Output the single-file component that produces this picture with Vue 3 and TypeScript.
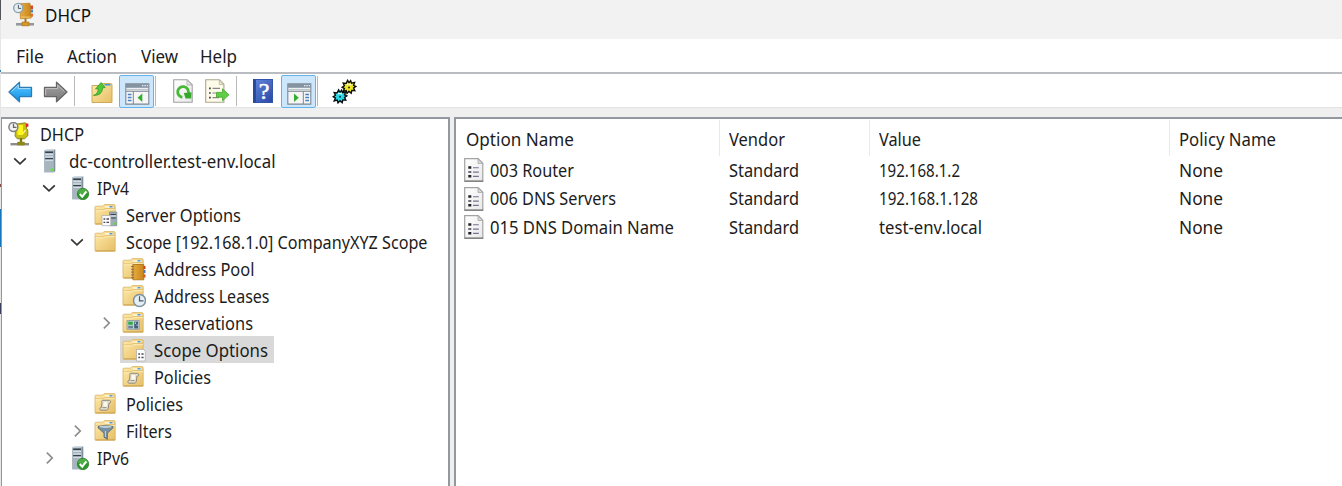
<script setup lang="ts">
import type { Directive } from 'vue'

interface TreeNode {
  label: string
  level: number
  icon: string
  width: number
  toggle?: 'open' | 'closed'
  selected?: boolean
}

interface Cell {
  text: string
  width: number
}

const menu: Cell[] = [
  { text: 'File', width: 28 },
  { text: 'Action', width: 50 },
  { text: 'View', width: 37 },
  { text: 'Help', width: 37 },
]

const nodes: TreeNode[] = [
  { label: 'DHCP', level: 0, icon: 'dhcp-tree', width: 44 },
  { label: 'dc-controller.test-env.local', level: 1, icon: 'server', width: 206.5, toggle: 'open' },
  { label: 'IPv4', level: 2, icon: 'server-ok', width: 32, toggle: 'open' },
  { label: 'Server Options', level: 3, icon: 'folder-server', width: 115 },
  { label: 'Scope [192.168.1.0] CompanyXYZ Scope', level: 3, icon: 'folder', width: 301.5, toggle: 'open' },
  { label: 'Address Pool', level: 4, icon: 'folder-book', width: 100.5 },
  { label: 'Address Leases', level: 4, icon: 'folder-clock', width: 115.5 },
  { label: 'Reservations', level: 4, icon: 'folder-card', width: 99, toggle: 'closed' },
  { label: 'Scope Options', level: 4, icon: 'folder-list', width: 114, selected: true },
  { label: 'Policies', level: 4, icon: 'folder-scroll', width: 57 },
  { label: 'Policies', level: 3, icon: 'folder-scroll', width: 57 },
  { label: 'Filters', level: 3, icon: 'folder-funnel', width: 46, toggle: 'closed' },
  { label: 'IPv6', level: 2, icon: 'server-ok', width: 32, toggle: 'closed' },
]

const columns: Cell[] = [
  { text: 'Option Name', width: 108 },
  { text: 'Vendor', width: 56 },
  { text: 'Value', width: 42 },
  { text: 'Policy Name', width: 97 },
]

const rows: Cell[][] = [
  [{ text: '003 Router', width: 84 }, { text: 'Standard', width: 70 }, { text: '192.168.1.2', width: 81 }, { text: 'None', width: 44 }],
  [{ text: '006 DNS Servers', width: 126 }, { text: 'Standard', width: 70 }, { text: '192.168.1.128', width: 99 }, { text: 'None', width: 44 }],
  [{ text: '015 DNS Domain Name', width: 184 }, { text: 'Standard', width: 70 }, { text: 'test-env.local', width: 103 }, { text: 'None', width: 44 }],
]

// Condenses a label horizontally so that it occupies the given width.
const vFit: Directive<HTMLElement, number> = {
  mounted(el, { value }) {
    el.style.transform = `scaleX(${value / el.getBoundingClientRect().width})`
  },
}
</script>

<template>
  <svg class="defs" width="0" height="0" aria-hidden="true">
    <defs>
      <linearGradient id="gFolder" x1="0" y1="0" x2="1" y2="1"><stop offset="0" stop-color="#ffeaaa" /><stop offset="1" stop-color="#e6be66" /></linearGradient>
      <linearGradient id="gBlue" x1="0" y1="0" x2="0" y2="1"><stop offset="0" stop-color="#70c4f7" /><stop offset=".5" stop-color="#35aef5" /><stop offset="1" stop-color="#1488d8" /></linearGradient>
      <linearGradient id="gGray" x1="0" y1="0" x2="0" y2="1"><stop offset="0" stop-color="#a5a5a5" /><stop offset="1" stop-color="#777" /></linearGradient>
      <linearGradient id="gServer" x1="0" y1="0" x2="1" y2="0"><stop offset="0" stop-color="#b5c2cc" /><stop offset="1" stop-color="#7b8b98" /></linearGradient>
      <linearGradient id="gPage" x1="0" y1="0" x2="1" y2="1"><stop offset="0" stop-color="#fff" /><stop offset="1" stop-color="#e9e9e9" /></linearGradient>
      <linearGradient id="gBook" x1="0" y1="0" x2="1" y2="0"><stop offset="0" stop-color="#e9ad3b" /><stop offset="1" stop-color="#c8841b" /></linearGradient>
    </defs>
    <symbol id="folder" viewBox="0 0 24 24">
      <path d="M1 4.2q0-1 1-1h6.5l1.6-1.6h9.7q1.4 0 1.4 1.4v17.5q0 .8-.8.8H1.8q-.8 0-.8-.8z" fill="url(#gFolder)" stroke="#d7b261" stroke-width=".8" />
      <path d="M10.8 3.2h8.4v1.6h-8.4z" fill="#fff6dc" /><path d="M15.5 3h3v1.5h-3z" fill="#4f9fe0" />
      <path d="M1.2 6.9h8.3l1.5-1.2h10" fill="none" stroke="#dcb765" stroke-width=".8" />
      <path d="M1.5 7.8h8.2l1.5-1.1h9.7" fill="none" stroke="#fff1bf" stroke-width=".9" />
      <path d="M1.4 20.8h20" stroke="#c99e4b" stroke-width=".8" />
    </symbol>
    <symbol id="server" viewBox="0 0 24 24">
      <path d="M7.2 1.5 9 .5h9.3v21.8l-1.5 1H7.2z" fill="url(#gServer)" />
      <path d="M7.2 1.5h9.6v21.8H7.2z" fill="#a7b5bf" /><path d="M9 .6h8.6l-.8 1H7.5z" fill="#dbe4ea" />
      <path d="M8.2 3.3h7.8M8.2 9.6h7.8" stroke="#32404b" stroke-width="1.4" />
      <path d="M8.2 5.3h7.8M8.2 8h7.8M8.2 11.3h7.8" stroke="#e2e9ed" stroke-width="1.1" />
      <path d="M13.5 19.6h3v2.1h-3z" fill="#5eea2c" />
    </symbol>
    <symbol id="server-ok" viewBox="0 0 24 24">
      <use href="#server" width="24" height="24" />
      <circle cx="18" cy="18" r="5.7" fill="#2f962c" stroke="#1f7a21" stroke-width=".7" />
      <path d="M12.9 17a5.2 5.2 0 0 1 10.2 0q-5 2-10.2 0z" fill="#57b64c" opacity=".7" />
      <path d="m14.8 18 2.4 2.7 4.2-5.4" fill="none" stroke="#fff" stroke-width="2" />
    </symbol>
    <symbol id="folder-server" viewBox="0 0 24 24">
      <use href="#folder" width="24" height="24" />
      <path d="M15.5 9h7.3v13.8h-7.3z" fill="#9eacb7" stroke="#71808d" stroke-width=".6" />
      <path d="M16.5 11.5h5.4M16.5 15h5.4" stroke="#33424e" /><path d="M16.5 13h5.4" stroke="#eef2f5" /><path d="M20 19.8h2.2v1.8H20z" fill="#54dd29" />
      <path d="M8 12.5h8.8v10.2H8z" fill="#fafafa" stroke="#a9a9a9" stroke-width=".7" />
      <path d="M9.5 16h1.7m1.3 0h2.5m-5.5 3.4h1.7m1.3 0h2.5" stroke="#48484f" stroke-width="1.3" />
    </symbol>
    <symbol id="folder-book" viewBox="0 0 24 24">
      <use href="#folder" width="24" height="24" />
      <path d="M21 9h2.5v3H21z" fill="#d83a25" /><path d="M21 13h2.5v3H21z" fill="#3c79d0" /><path d="M21 17.5h2.5v3H21z" fill="#e54b2a" />
      <path d="M10.8 7.5h11v15.3h-11z" fill="url(#gBook)" stroke="#aa6d13" stroke-width=".8" />
      <path d="M9.2 9.5h3m-3 2.8h3m-3 2.8h3m-3 2.8h3m-3 2.8h3" stroke="#7c6a54" stroke-width="1" />
    </symbol>
    <symbol id="folder-clock" viewBox="0 0 24 24">
      <use href="#folder" width="24" height="24" />
      <circle cx="17.5" cy="16.5" r="6" fill="#e6eff4" stroke="#7b929f" stroke-width="1.5" />
      <path d="M17.5 12.2v4.6h4" fill="none" stroke="#42586b" stroke-width="1.2" />
    </symbol>
    <symbol id="folder-card" viewBox="0 0 24 24">
      <use href="#folder" width="24" height="24" />
      <path d="M5 9.5h12.3v8.8H5z" fill="#c3d6dd" stroke="#8b969c" stroke-width=".8" />
      <path d="M6.2 10.6h4.6v3.2H6.2z" fill="#2fac46" /><path d="M12.2 10.6h3.9v6.9h-3.9z" fill="#47607a" /><path d="M13 11.5h1v1.3h-1zM14.6 13.5h.9v1.3h-.9z" fill="#e3edf2" /><path d="M6.2 14.8h4.9v2.6H6.2z" fill="#6d8496" />
    </symbol>
    <symbol id="folder-list" viewBox="0 0 24 24">
      <use href="#folder" width="24" height="24" />
      <path d="M14.5 11.5h7l1.8 1.8v9.7h-8.8z" fill="#fff" stroke="#a9a9ac" stroke-width=".7" />
      <path d="M16.3 16h1.7m1.4 0h2.2m-5.3 3.5h1.7m1.4 0h2.2" stroke="#4c4c54" stroke-width="1.3" />
    </symbol>
    <symbol id="folder-scroll" viewBox="0 0 24 24">
      <use href="#folder" width="24" height="24" />
      <path d="M8.2 8.3h7.6q1.7 1.5 0 3h-.9l-.6 5q-.3 1.9-1.9 1.9H6.6q-1.7-1.4 0-2.9h.9l.4-4.6q-.7-1.5.3-2.4z" fill="#e5ddc8" stroke="#8f8a7e" stroke-width="1" />
      <path d="M9.8 10h3.4v4.6H9.3z" fill="#fbf8ee" /><path d="M8.5 15.6h4" stroke="#8f8a7e" stroke-width=".9" />
    </symbol>
    <symbol id="folder-funnel" viewBox="0 0 24 24">
      <use href="#folder" width="24" height="24" />
      <path d="M4 7.5q7.5-2 15 0v1.3l-5.6 5.4v6l-3.4-2v-4L4 8.8z" fill="#77909f" stroke="#4d6575" stroke-width=".8" />
      <ellipse cx="11.5" cy="7.8" rx="6.2" ry="1.1" fill="#bed0da" /><path d="M11.4 12v6" stroke="#c2d4de" />
    </symbol>
    <symbol id="dhcp-tree" viewBox="0 0 24 24">
      <path d="M8 2.2 17 .8l1.6 1v5l1.2 1v6l-3.3 3H9.3L7 14z" fill="#c9c017" stroke="#7c770c" stroke-width=".8" />
      <path d="M9.5 3H15v10H9.5z" fill="#fdf51c" /><path d="M17.8 1.6h2.6v3.2h-2.6z" fill="#e3262a" /><path d="M15 11.5 17.5 8" stroke="#fffbd0" stroke-width="1.2" />
      <path d="M13 16v6" stroke="#807a0d" stroke-width="2.4" />
      <path d="M2.5 22.2h18.5" stroke="#8c8c8c" stroke-width="2.4" /><path d="M9.3 19.8h7.4v3.6H9.3z" fill="#8d8714" />
      <circle cx="5.4" cy="5" r="4.5" fill="#f1f1f1" stroke="#808080" stroke-width="1.5" />
      <path d="M5.5 1.8v3.6h3" fill="none" stroke="#666" stroke-width="1.3" />
    </symbol>
    <symbol id="dhcp-title" viewBox="0 0 24 24">
      <path d="M17 3h3v3.6h-3z" fill="#d94733" /><path d="M17 7h3v3h-3z" fill="#4488cd" /><path d="M17 11.2h3v3h-3z" fill="#f2663c" />
      <path d="M6.8 1.2 17 .7l1.2 14.8-10.7.8z" fill="url(#gBook)" stroke="#b47c20" stroke-width=".7" />
      <path d="M8 14.6h9.5" stroke="#f4ca69" /><path d="M12.5 16v5" stroke="#9f7a27" stroke-width="2" />
      <path d="M3 21.8h18" stroke="#929a9e" stroke-width="2.6" /><path d="M9 19.5h7v3.8H9z" fill="#d6982b" stroke="#a76e13" stroke-width=".6" />
      <circle cx="5.3" cy="5.5" r="4.6" fill="#e5edf1" stroke="#8fa2ac" stroke-width="1.4" />
      <path d="M5.4 2.5v3.4h2.8" fill="none" stroke="#4c5d69" />
    </symbol>
    <symbol id="console" viewBox="0 0 25 22">
      <path d="M.8.8h23v20.3H.8z" fill="#f6f6f6" stroke="#7c8894" stroke-width="1.1" /><path d="M1 1h22.7v3.8H1z" fill="#8493a2" />
      <path d="M17 2.7h1.4m1 0h1.4m1 0h1.2" stroke="#e6edf4" stroke-width="1.3" /><path d="M1.4 6.6h22" stroke="#bec6ce" stroke-width="1.5" /><path d="M1 8.3h23" stroke="#7c8894" />
    </symbol>
    <symbol id="option" viewBox="0 0 20 24">
      <path d="M.7.7h13.5l4.6 4.6v17.8H.7z" fill="url(#gPage)" stroke="#a2a2a2" stroke-width="1.2" />
      <path d="M14 1v4.5h4.7z" fill="#d8d8d8" stroke="#aaa" stroke-width=".8" /><path d="M.5 23.2h18.7" stroke="#777" stroke-width="1.2" />
      <path d="M4.3 9.5h3M4.3 18.3h3" stroke="#202027" stroke-width="2.6" /><path d="M4.3 14h3" stroke="#6b6b7c" stroke-width="2" />
      <path d="M9 9.8h5.8M9 14.1h5.8M9 18.4h5.8" stroke="#77728f" stroke-width="1.1" />
    </symbol>
    <symbol id="cog" viewBox="-8 -8 16 16" overflow="visible">
      <path d="M-1.4-6.6 0-4.2 1.6-6.4 2.6-3.8 5.6-4.6 4.6-1.6 6.8-.6 4.6 1 5.8 3.6 2.8 3.4 2.2 6.2 0 4.2-2 6.4-2.8 3.6-5.8 4.4-4.6 1.6-6.8.2-4.6-1.2-5.8-4-2.8-3.6z" />
    </symbol>
  </svg>

  <div class="screen">
    <div class="backdrop"><i class="s1" /><i class="s2" /><i class="s3" /><i class="s4" /><i class="s5" /></div>
    <main class="window">
      <header class="titlebar">
        <svg class="app-icon"><use href="#dhcp-title" /></svg>
        <span v-fit="46" class="text">DHCP</span>
      </header>
      <nav class="menubar">
        <span v-for="m in menu" :key="m.text" class="menu-item"><span v-fit="m.width" class="text">{{ m.text }}</span></span>
      </nav>
      <div class="toolbar">
        <svg class="tool arrow back" viewBox="0 0 25 22"><path d="M1 11 11.5 1.2v5.2h12v9.2h-12v5.2z" fill="url(#gBlue)" stroke="#2c7db5" stroke-width="1.3" stroke-linejoin="round" /><path d="M3.5 10.5 10.3 4v3.6h12" fill="none" stroke="#a9dcf9" /></svg>
        <svg class="tool arrow forward" viewBox="0 0 25 22"><path d="M24 11 13.5 1.2v5.2h-12v9.2h12v5.2z" fill="url(#gGray)" stroke="#666" stroke-width="1.3" stroke-linejoin="round" /><path d="M2.7 14.3V7.6h12V4l6.8 6.5" fill="none" stroke="#c0c0c0" /></svg>
        <i class="rule r1" />
        <svg class="tool up" viewBox="0 0 22 24">
          <path d="M1 5.5h8l2-2h8.5q1.5 0 1.5 1.5v17.5H1z" fill="url(#gFolder)" stroke="#c9a34d" stroke-width=".9" /><path d="M13.5 4.8h6" stroke="#4d9adc" stroke-width="1.6" />
          <path d="M2.5 15.4Q7.3 14 7.2 8.6L4.5 9 10 2.5l4.2 5-2.6.4Q11.3 15.6 2.5 15.4z" fill="#54c738" stroke="#319b20" stroke-width=".8" />
        </svg>
        <span class="pressed p1"><svg class="console" viewBox="0 0 25 22"><use href="#console" width="25" height="22" /><path d="M8.3 8.5V21" stroke="#7c8894" /><path d="M2.8 11.5h3.7M2.8 14.5h3.7M2.8 17.5h3.7" stroke="#4880c2" stroke-width="1.3" /><path d="M17.3 10.5v8.4l-4.8-4.2z" fill="#35ad2c" /></svg></span>
        <i class="rule r2" />
        <svg class="tool refresh" viewBox="0 0 20 24"><path d="M.7.7h13.5l5 5v17.6H.7z" fill="url(#gPage)" stroke="#a1a1a1" stroke-width="1.1" /><path d="M14 1v5h5z" fill="#e8e8e8" stroke="#aaa" stroke-width=".8" /><path d="M9.4 18.3a5.4 5.4 0 1 1 6-4.4" fill="none" stroke="#46b936" stroke-width="2.8" /><path d="m10.8 13.9 7.7-.6-.3 6.2-5.6.1z" fill="#35a72a" /></svg>
        <svg class="tool export" viewBox="0 0 25 24"><path d="M.7.7h13.7l4.5 4.6v18H.7z" fill="#fffbea" stroke="#aaa690" stroke-width="1.1" /><path d="M14.3 1v4.6h4.5z" fill="#eee7cc" stroke="#b6b29a" stroke-width=".8" /><path d="M4 9.3h1.8M4 14h1.8M4 18.7h1.8" stroke="#464646" stroke-width="1.7" /><path d="M7.5 9.3H15M7.5 14h4M7.5 18.7H14" stroke="#8b8789" stroke-width="1.2" /><path d="M11.5 13.4h6V9.8l6.5 6-6.5 6v-3.6h-6z" fill="#61cc46" stroke="#3fa92c" stroke-width=".8" /></svg>
        <i class="rule r3" />
        <span class="tool help">?</span>
        <span class="pressed p2"><svg class="console" viewBox="0 0 25 22"><use href="#console" width="25" height="22" /><path d="M16.3 8.5V21" stroke="#7c8894" /><path d="M18.3 11.5H22M18.3 14.5H22M18.3 17.5H22" stroke="#4880c2" stroke-width="1.3" /><path d="M7 10.5v8.4l4.8-4.2z" fill="#35ad2c" /></svg></span>
        <i class="rule r4" />
        <svg class="tool gears" viewBox="0 0 25 26">
          <use href="#cog" x="9" y="0" width="16" height="16" fill="#f0e62a" stroke="#0d0d05" stroke-width="1.4" />
          <path d="M14.5 5.8q2.2-1.6 4.6.2" fill="none" stroke="#fffde0" stroke-width="1.1" /><circle cx="17" cy="8.5" r="1" fill="#3a3608" />
          <use href="#cog" x="0" y="9.5" width="16" height="16" fill="#2ad7e6" stroke="#050f10" stroke-width="1.4" />
          <path d="M5.6 15.1q2.2-1.6 4.6.2" fill="none" stroke="#e3feff" stroke-width="1.1" /><circle cx="8" cy="17.7" r="1" fill="#073b40" />
        </svg>
      </div>

      <section class="panes">
        <div class="tree">
          <div v-for="(n, i) in nodes" :key="i" class="node" :class="['level-' + n.level, { selected: n.selected }]">
            <span class="toggle"><svg v-if="n.toggle" :class="n.toggle" viewBox="0 0 14 14"><path v-if="n.toggle === 'open'" d="m1.2 4.3 5.8 5.5 5.8-5.5" /><path v-else d="M4 1.5 9.6 7 4 12.5" /></svg></span>
            <span class="node-body" :style="{ width: n.width + 39.5 + 'px' }"><svg class="node-icon"><use :href="'#' + n.icon" /></svg><span v-fit="n.width" class="text">{{ n.label }}</span></span>
          </div>
        </div>
        <div class="list">
          <div class="grid head"><div v-for="c in columns" :key="c.text" class="cell"><span v-fit="c.width" class="text">{{ c.text }}</span></div></div>
          <div v-for="(r, i) in rows" :key="i" class="grid row">
            <div v-for="(c, j) in r" :key="j" class="cell"><svg v-if="j === 0" class="option"><use href="#option" /></svg><span v-fit="c.width" class="text">{{ c.text }}</span></div>
          </div>
        </div>
      </section>
    </main>
  </div>
</template>

<style>
html, body { margin: 0; overflow: hidden; }
</style>

<style scoped>
.defs { position: absolute; }
.screen { width: 1342px; height: 486px; display: flex; overflow: hidden; font: 17.3px/27px "Noto Sans", "Open Sans", sans-serif; color: #1c1c1c; background: #fff; }
.backdrop { width: 1px; flex: none; display: flex; flex-direction: column; background: #e6e6e6; }
.backdrop i { display: block; width: 1px; }
.s1 { height: 20px; background: #55555a; }
.s2 { height: 2px; margin-top: 50px; background: #3484b8; }
.s3 { height: 3px; margin-top: 112px; background: #8b4c40; }
.s4 { height: 38px; margin-top: 22px; background: #1675bd; }
.s5 { height: 11px; margin-top: 56px; background: #3c3d5d; }
.window { flex: 1; min-width: 0; display: flex; flex-direction: column; background: #efefef; }
.text { display: inline-block; white-space: pre; transform-origin: 0 50%; flex: none; }
.titlebar { height: 39px; flex: none; box-sizing: border-box; display: flex; align-items: flex-start; padding: 2px 0 0 12px; background: #f2f2f2; color: #111; }
.app-icon { width: 24px; height: 25px; margin-right: 8px; }
.menubar { height: 33px; flex: none; display: flex; background: #fff; padding-left: 15px; line-height: 36px; border-bottom: 2px solid #b9bdc1; }
.menu-item:nth-child(1) { width: 51px; }
.menu-item:nth-child(2) { width: 74px; }
.menu-item:nth-child(3) { width: 59px; }
.toolbar { height: 32px; flex: none; display: flex; align-items: flex-start; background: #fff; border-bottom: 1px solid #e3e3e3; padding: 1px 0 0 7px; }
.tool { flex: none; }
.arrow { width: 25px; height: 22px; margin-top: 6px; }
.forward { margin-left: 10px; }
.rule { width: 1px; height: 30px; flex: none; margin-top: 1px; background: #b9b9b9; }
.r1 { margin-left: 6px; }
.up { width: 22px; height: 24px; margin: 5px 0 0 16px; }
.pressed { box-sizing: border-box; width: 35px; height: 33px; flex: none; display: flex; border: 1px solid #66b3ec; border-radius: 2px; background: #cce6fb; padding: 7px 0 0 5px; }
.console { width: 25px; height: 22px; }
.p1 { margin-left: 6px; }
.r2 { margin-left: 1px; }
.refresh { width: 20px; height: 24px; margin: 4px 0 0 17px; }
.export { width: 25px; height: 24px; margin: 4px 0 0 12px; }
.r3 { margin-left: 6px; }
.help { box-sizing: border-box; width: 20px; height: 24px; margin: 4px 0 0 16px; background: linear-gradient(135deg, #5f82d8, #2948a8); border: 1px solid #3454a9; border-left: 3px solid #29499c; color: #fff; font: 24px/23px "Liberation Serif", serif; -webkit-text-stroke: .5px #fff; text-align: center; }
.p2 { margin-left: 8px; }
.r4 { margin-left: 1px; }
.gears { width: 25px; height: 26px; margin: 4px 0 0 14px; }
.panes { flex: 1; min-height: 0; display: flex; gap: 4px; padding-top: 9px; }
.tree, .list { box-sizing: border-box; border: 2px solid #9298a0; border-bottom: 0; background: #fff; overflow: hidden; }
.tree { width: 449px; flex: none; border-left-width: 1px; padding-top: 1px; }
.list { flex: 1; min-width: 0; border-right: 0; }
.node { display: flex; height: 27px; }
.toggle { width: 14px; height: 27px; flex: none; margin-right: 8px; display: flex; align-items: center; }
.toggle svg { width: 14px; height: 14px; margin: 1px 0 0 -.5px; fill: none; stroke: #343434; stroke-width: 1.7; }
.toggle svg.closed { margin-left: .5px; stroke: #8b8b8b; }
.level-0 { margin-left: -17px; }
.level-1 { margin-left: 11.5px; }
.level-2 { margin-left: 40px; }
.level-3 { margin-left: 68.5px; }
.level-4 { margin-left: 97px; }
.node-body { display: flex; align-items: center; height: 27px; overflow: hidden; margin-left: -1px; padding-left: 2px; box-sizing: border-box; }
.node-body .text { padding-top: 2px; }
.selected .node-body { background: #d9d9d9; }
.node-icon { width: 24px; height: 24px; flex: none; margin-right: 8px; }
.grid { display: grid; grid-template-columns: 264px 150px 300px 1fr; }
.cell { box-sizing: border-box; display: flex; align-items: center; padding-left: 9px; min-width: 0; }
.head { height: 36px; margin-top: 1px; }
.head .cell { border-right: 1px solid #e9e9e9; padding-top: 3px; height: 36px; }
.head .cell:first-child { padding-left: 10px; }
.head .cell:last-child { border-right: 0; }
.row { height: 28.5px; }
.option { width: 20px; height: 24px; margin: 0 6px 0 -1px; }
</style>
